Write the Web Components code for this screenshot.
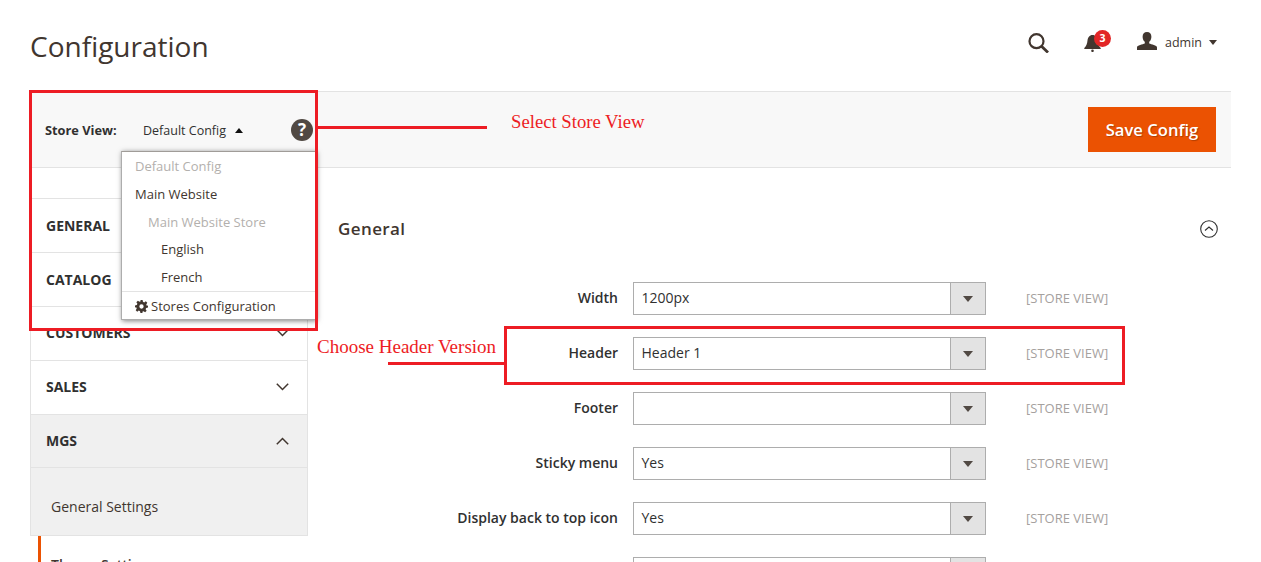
<!DOCTYPE html>
<html lang="en">
<head>
<meta charset="utf-8">
<title>Configuration</title>
<style>
html,body{margin:0;padding:0;background:#fff;}
body{width:1261px;height:562px;overflow:hidden;position:relative;font-family:"Open Sans",sans-serif;color:#303030;font-size:14px;}
.page{padding:0 30px;width:1201px;}
.content{display:flex;gap:30px;align-items:flex-start;}
</style>
</head>
<body>
<div class="page">
  <m-header></m-header>
  <m-storebar></m-storebar>
  <div class="content">
    <m-sidebar>
      <m-nav-item style="padding-bottom:0">GENERAL</m-nav-item>
      <m-nav-item style="padding-bottom:0">CATALOG</m-nav-item>
      <m-nav-item>CUSTOMERS</m-nav-item>
      <m-nav-item>SALES</m-nav-item>
      <m-nav-item open>MGS</m-nav-item>
      <m-nav-sub>General Settings</m-nav-sub>
      <m-nav-sub active>Theme Settings</m-nav-sub>
    </m-sidebar>
    <m-section heading="General">
      <m-field label="Width" value="1200px" scope></m-field>
      <m-field label="Header" value="Header 1" scope></m-field>
      <m-field label="Footer" value="" scope></m-field>
      <m-field label="Sticky menu" value="Yes" scope></m-field>
      <m-field label="Display back to top icon" value="Yes" scope></m-field>
      <m-field label="" value=""></m-field>
    </m-section>
  </div>
</div>
<m-store-menu></m-store-menu>
<m-annotations></m-annotations>
<script>
function def(name, html){
  customElements.define(name, class extends HTMLElement{
    connectedCallback(){
      if(this.shadowRoot) return;
      const r=this.attachShadow({mode:"open"});
      r.innerHTML=typeof html==="function"?html(this):html;
    }
  });
}
def("m-header",`<style>
:host{display:flex;align-items:flex-start;justify-content:space-between;height:91px;color:#41362f}
h1{margin:0;padding-top:26px;font:400 28px/40px "Open Sans",sans-serif;color:#41362f}
.tools{display:flex;align-items:center;padding:28px 14px 0 0;height:28px}
.search{margin:1px 35px 0 0;display:block}
.bell{position:relative;width:17px;height:17px;margin:3px 36px 0 0}
.bell svg{display:block}
.badge{position:absolute;left:10px;top:-5px;width:17px;height:17px;border-radius:50%;background:#e22626;color:#fff;font:700 10.500px/17px "Open Sans",sans-serif;text-align:center}
.user{display:block;margin-top:-2px}
.name{font:400 12.500px/20px "Open Sans",sans-serif;margin:2px 0 0 8px;color:#41362f}
.caret{width:0;height:0;border:4.500px solid transparent;border-top:5px solid #41362f;border-bottom:0;margin:1px 0 0 7px}
</style>
<h1>Configuration</h1>
<div class="tools">
<svg class="search" width="21" height="20" viewBox="0 0 21 20" fill="none" stroke="#41362f"><circle cx="8.500" cy="8.200" r="7" stroke-width="2.200"/><path d="M13.500 13.300 20 19.500" stroke-width="2.800"/></svg>
<div class="bell"><svg width="17" height="17" viewBox="0 0 17 17" fill="#41362f"><path d="M8.500 0C5.500 0 3.800 2.500 3.500 5.500 3.200 9 2.300 11 .3 13v1h16.400v-1C14.700 11 13.800 9 13.500 5.500 13.200 2.500 11.500 0 8.500 0Z"/><circle cx="8.500" cy="15.800" r="1.300"/></svg><span class="badge">3</span></div>
<svg class="user" width="20" height="18" viewBox="0 0 20 18" fill="#41362f"><path d="M10 0c2.800 0 4.400 1.900 4.400 4.700 0 2.200-.9 4-2.200 5.100v1.800c2 .9 7.800 1.600 7.800 3.900V18H0v-2.500c0-2.300 5.800-3 7.800-3.900V9.800C6.500 8.700 5.600 6.900 5.600 4.700 5.600 1.900 7.200 0 10 0Z"/></svg>
<span class="name">admin</span><span class="caret"></span>
</div>`);
def("m-storebar",`<style>
:host{display:flex;align-items:center;box-sizing:border-box;height:77px;background:#f8f8f8;border-top:1px solid #e3e3e3;border-bottom:1px solid #e3e3e3;padding:0 15px;color:#41362f}
b{font:700 12.800px/18px "Open Sans",sans-serif;color:#303030;margin:0 26px 0 0;width:72px;white-space:nowrap}
.cur{font:400 12.500px/18px "Open Sans",sans-serif;color:#303030;margin-top:2px}
.up{width:0;height:0;border:4.500px solid transparent;border-bottom:5px solid #111;border-top:0;margin:1px 0 0 9px}
.help{width:22px;height:22px;border-radius:50%;background:#514943;color:#fff;font:700 17px/22px "Open Sans",sans-serif;text-align:center;margin-left:48px}
.btn{margin-left:auto;width:128px;height:45px;background:#eb5202;color:#fff;font:600 16.600px/45px "Open Sans",sans-serif;text-align:center;text-shadow:1px 1px 1px rgba(0,0,0,.25)}
</style>
<b>Store View:</b><span class="cur">Default Config</span><span class="up"></span><span class="help">?</span><span class="btn">Save Config</span>`);
def("m-sidebar",`<style>
:host{display:block;flex:none;width:278px;margin-top:30px;border-top:1px solid #e3e3e3;box-sizing:border-box}
</style><slot></slot>`);
def("m-nav-item",el=>{
 const open=el.hasAttribute("open");
 return `<style>
:host{display:flex;align-items:center;justify-content:space-between;box-sizing:border-box;height:${open?53:54}px;padding:0 18px 1px 15px;border:1px solid #e3e3e3;border-top:0;background:${open?"#f0f0f0":"#fff"};font:700 14px/20px "Open Sans",sans-serif;color:#303030}
svg{display:block}
</style><slot></slot><svg width="13" height="8" viewBox="0 0 13 8" fill="none" stroke="#41362f" stroke-width="1.500"><path d="${open?"M.8 7.200 6.500 1.500l5.700 5.700":"M.8.800l5.700 5.700 5.700-5.700"}"/></svg>`;
});
def("m-nav-sub",el=>{
 const a=el.hasAttribute("active");
 return `<style>
:host{display:block;box-sizing:border-box;height:${a?60:68}px;padding:${a?"19px 0 0 10px":"29px 0 0 20px"};font:${a?600:400} 14px/20px "Open Sans",sans-serif;color:#41362f;background:${a?"#fff":"#f0f0f0"};border:1px solid #e3e3e3;border-top:0;${a?"border-left:3px solid #eb5202;margin-left:8px;border-right:0;border-bottom:0;":""}}
</style><slot></slot>`;
});
def("m-section",el=>`<style>
:host{display:block;flex:1;min-width:0}
header{display:flex;justify-content:space-between;align-items:center;height:114px;box-sizing:border-box;padding:8px 13px 0 0}
h2{margin:0;font:600 17px/24px "Open Sans",sans-serif;letter-spacing:.4px;color:#41362f}
svg{display:block}
.rows{display:flex;flex-direction:column;gap:22px}
</style><header><h2>${el.getAttribute("heading")}</h2><svg width="18" height="18" viewBox="0 0 18 18" fill="none" stroke="#303030" stroke-width="1.100"><circle cx="9" cy="9" r="8.300"/><path d="M5 10.500 9 7l4 3.500"/></svg></header><div class="rows"><slot></slot></div>`);
def("m-field",el=>`<style>
:host{display:grid;grid-template-columns:280px 353px auto;column-gap:15px;align-items:center;height:33px}
label{text-align:right;font:600 14px/20px "Open Sans",sans-serif;color:#303030;padding-bottom:2px}
.sel{grid-column:2;display:flex;box-sizing:border-box;height:33px;border:1px solid #adadad;background:#fff;font:400 14px/29px "Open Sans",sans-serif;color:#303030}
.v{flex:1;padding-left:7.500px}
.a{width:34px;background:#e3e3e3;border-left:1px solid #adadad;display:flex;align-items:center;justify-content:center}
.a i{display:block;width:0;height:0;border:5px solid transparent;border-top:6px solid #514943;border-bottom:0}
.s{font:400 13px/18px "Open Sans",sans-serif;color:#a5a19e;margin-left:25px;white-space:nowrap;padding-bottom:2px}
</style><label>${el.getAttribute("label")}</label><div class="sel"><span class="v">${el.getAttribute("value")}</span><span class="a"><i></i></span></div>${el.hasAttribute("scope")?'<span class="s">[STORE VIEW]</span>':""}`);
def("m-store-menu",`<style>
:host{position:absolute;left:121px;top:151px;width:195px;height:169px;box-sizing:border-box;background:#fff;border:1px solid #adadad;border-top-color:#a09c98;box-shadow:1px 1px 5px rgba(0,0,0,.5);font:400 13px/28px "Open Sans",sans-serif;color:#41362f}
ul{list-style:none;margin:0;padding:0}
li{height:27.700px;padding-left:13px;white-space:nowrap}
.dim{color:#b3b0ad}
.l2{padding-left:26px;line-height:30px}.l3{padding-left:39px}
.foot{position:absolute;left:0;right:0;bottom:0;height:28px;box-sizing:border-box;border-top:1px solid #e3e3e3;padding:1px 0 0 13px;display:flex;align-items:center;gap:3px;color:#41362f}
svg{display:block}
</style><ul>
<li class="dim">Default Config</li>
<li>Main Website</li>
<li class="l2 dim">Main Website Store</li>
<li class="l3">English</li>
<li class="l3">French</li>
</ul><div class="foot"><svg width="13" height="13" viewBox="0 0 24 24" fill="#41362f"><path fill-rule="evenodd" d="M10 0h4l.7 3.400 2.300 1 2.900-1.900 2.800 2.800-1.900 2.900 1 2.300L24 10v4l-3.400.7-1 2.300 1.900 2.900-2.800 2.800-2.900-1.900-2.300 1L14 24h-4l-.7-3.400-2.300-1-2.900 1.900-2.800-2.800 1.900-2.900-1-2.300L0 14v-4l3.400-.7 1-2.300-1.900-2.900 2.800-2.800 2.900 1.900 2.300-1ZM12 8a4 4 0 1 0 0 8 4 4 0 0 0 0-8Z"/></svg><span>Stores Configuration</span></div>`);
def("m-annotations",`<style>
:host{position:absolute;inset:0;pointer-events:none;display:block}
.box,.ln,.t{position:absolute;box-sizing:border-box}
.box{border:3px solid #ed1c24}
.ln{background:#ed1c24}
.t{font:400 19px/22px "Liberation Serif",serif;color:#ed1c24;white-space:nowrap}
</style>
<div class="box" style="left:29px;top:90px;width:289px;height:241px"></div>
<div class="ln" style="left:317px;top:126px;width:170px;height:3px"></div>
<div class="t" style="left:511px;top:111px;font-size:18.700px">Select Store View</div>
<div class="box" style="left:504px;top:326px;width:621px;height:59px"></div>
<div class="ln" style="left:388px;top:362px;width:117px;height:3px"></div>
<div class="t" style="left:317px;top:336px">Choose Header Version</div>`);
</script>
</body>
</html>
